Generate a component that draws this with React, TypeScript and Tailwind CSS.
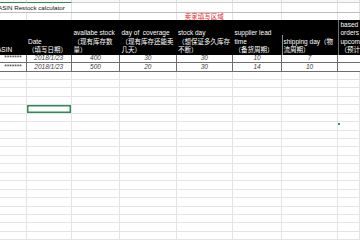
import React from 'react';

const COLS = 'grid grid-cols-[26.5px_45.5px_48px_56.5px_56.5px_49px_56px_22px]';
const LETTERS = ['A', 'B', 'C', 'D', 'E', 'F', 'G', 'H'];

const rows = [
  ['*******', '2018/1/23', '400', '30', '30', '10', '7', ''],
  ['*******', '2018/1/23', '500', '20', '30', '14', '10', ''],
];

const headers: string[][] = [
  ['ASIN'],
  ['Date', '（填写日期）'],
  ['availabe stock', '（现有库存数', '量）'],
  ['day of  coverage', '（现有库存还能卖', '几天）'],
  ['stock day', '（想保证多久库存', '不断）'],
  ['supplier lead', 'time', '（备货周期）'],
  ['shipping day（物', '流周期）'],
  ['based', 'orders', 'upcoming', '（预计日销量）'],
];

function HeaderCell({ lines, idx }: { lines: string[]; idx: number }) {
  if (idx === 0) {
    return (
      <div className="flex h-full flex-col justify-end overflow-hidden">
        <div className="-ml-[3px] whitespace-nowrap">{lines[0]}</div>
      </div>
    );
  }
  if (idx === 6) {
    return (
      <div className="flex h-full flex-col pt-[15px]">
        <div className="flex flex-1 flex-col justify-end border-l border-[#8a8a8a] pl-[0.5px]">
          {lines.map(l => (
            <div key={l} className="whitespace-pre">{l}</div>
          ))}
        </div>
      </div>
    );
  }
  return (
    <div
      className={`flex h-full flex-col justify-end overflow-hidden pl-[1.5px] ${idx === 7 ? 'border-l border-[#6f6f6f]' : ''}`}
    >
      {lines.map(l => (
        <div key={l} className="whitespace-pre">{l}</div>
      ))}
    </div>
  );
}

export default function App() {
  return (
    <div className="relative h-[240px] w-[360px] overflow-hidden bg-white font-['Liberation_Sans','Noto_Sans_CJK_SC',sans-serif] text-[6.5px] text-[#222]">
      {/* column letters, mostly scrolled off */}
      <div className={`${COLS} h-[3px] overflow-hidden bg-[#f7f7f7]`}>
        {LETTERS.map((l, i) => (
          <div
            key={l}
            className={`flex h-[3px] justify-center overflow-hidden border-r border-[#dadada] ${i < 2 ? 'border-b border-b-[#2e8b57]' : 'border-b border-b-[#d0d0d0]'}`}
          >
            <span className="-mt-[6px] block text-[8px] leading-[8px] text-[#777]">{l}</span>
          </div>
        ))}
      </div>

      {/* row 1: title */}
      <div className={`${COLS} h-[9.5px] border-b border-[#bdbdbd]`}>
        {LETTERS.map((l, i) => (
          <div key={l} className={`flex items-end pb-[0.5px] ${i > 0 ? 'border-r border-[#e3e3e3]' : ''}`}>
            {i === 0 && (
              <span className="relative z-10 -ml-[2px] whitespace-nowrap bg-white text-[6.2px] leading-[7px] text-[#111]">
                ASIN Restock calculator
              </span>
            )}
          </div>
        ))}
      </div>

      {/* row 2: red note */}
      <div className={`${COLS} h-[7.5px]`}>
        {LETTERS.map((l, i) => (
          <div key={l} className="flex items-end justify-center border-r border-[#e3e3e3]">
            {i === 4 && (
              <span className="whitespace-nowrap leading-[7px] text-[#e8262b]">卖家填写区域</span>
            )}
          </div>
        ))}
      </div>

      {/* header row */}
      <div className={`${COLS} h-[34.5px] bg-black leading-[8.5px] text-white`}>
        {headers.map((lines, i) => (
          <HeaderCell key={i} lines={lines} idx={i} />
        ))}
      </div>

      {/* data rows */}
      {rows.map((r, ri) => (
        <div key={ri} className={`${COLS} h-[8.5px] border-b border-[#6e6e6e]`}>
          {r.map((v, ci) => (
            <div
              key={ci}
              className={`flex items-center justify-center overflow-hidden leading-[8px] italic text-[#3c3c3c] ${ci < 7 ? 'border-r border-[#6e6e6e]' : ''}`}
            >
              {v}
            </div>
          ))}
        </div>
      ))}

      {/* empty grid */}
      {Array.from({ length: 20 }).map((_, ri) => (
        <div key={ri} className={`${COLS} h-[8.45px]`}>
          {LETTERS.map((l, ci) => (
            <div
              key={l}
              className={`border-r border-b border-[#e4e4e4] ${ri === 4 && ci === 1 ? 'ring-[1.5px] ring-inset ring-[#2e8b57]' : ''}`}
            >
              {ri === 6 && ci === 7 && <div className="mt-[1px] h-[2px] w-[2px] bg-[#1fa34a]" />}
            </div>
          ))}
        </div>
      ))}
    </div>
  );
}
